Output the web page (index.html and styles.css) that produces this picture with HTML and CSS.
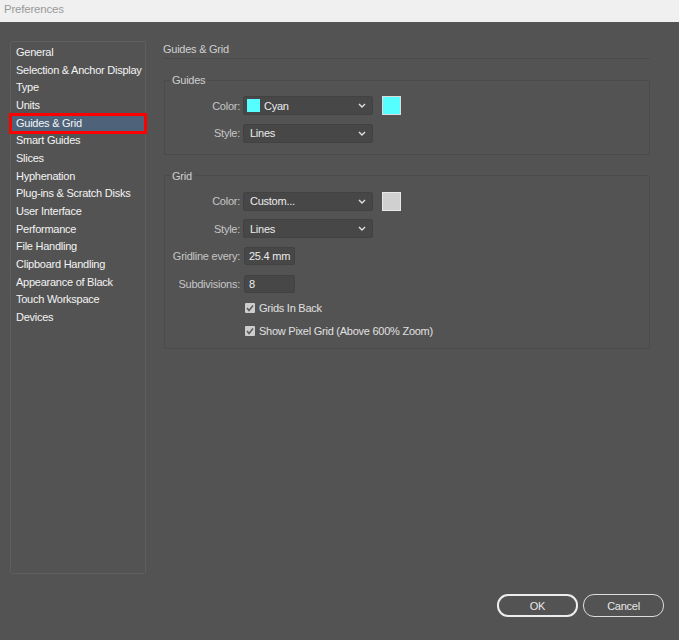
FILE: index.html
```html
<!DOCTYPE html>
<html>
<head>
<meta charset="utf-8">
<title>Preferences</title>
<link rel="stylesheet" href="styles.css">
</head>
<body>
<div class="window">
  <div class="titlebar">Preferences</div>
  <div class="main">
    <ul class="nav">
      <li>General</li>
      <li>Selection &amp; Anchor Display</li>
      <li>Type</li>
      <li>Units</li>
      <li class="selected">Guides &amp; Grid</li>
      <li>Smart Guides</li>
      <li>Slices</li>
      <li>Hyphenation</li>
      <li>Plug-ins &amp; Scratch Disks</li>
      <li>User Interface</li>
      <li>Performance</li>
      <li>File Handling</li>
      <li>Clipboard Handling</li>
      <li>Appearance of Black</li>
      <li>Touch Workspace</li>
      <li>Devices</li>
    </ul>
    <div class="content">
      <div class="page-title">Guides &amp; Grid</div>
      <fieldset class="group">
        <legend>Guides</legend>
        <div class="form">
          <span class="lbl">Color:</span>
          <div class="ctrl">
            <div class="select"><span class="mini cyan"></span><span class="val">Cyan</span><svg class="chev" width="8" height="5" viewBox="0 0 8 5"><polyline points="1,1 4,4 7,1" fill="none" stroke="#e0e0e0" stroke-width="1.4"/></svg></div>
            <span class="swatch cyan"></span>
          </div>
          <span class="lbl">Style:</span>
          <div class="ctrl">
            <div class="select"><span class="val">Lines</span><svg class="chev" width="8" height="5" viewBox="0 0 8 5"><polyline points="1,1 4,4 7,1" fill="none" stroke="#e0e0e0" stroke-width="1.4"/></svg></div>
          </div>
        </div>
      </fieldset>
      <fieldset class="group grid-group">
        <legend>Grid</legend>
        <div class="form">
          <span class="lbl">Color:</span>
          <div class="ctrl">
            <div class="select"><span class="val">Custom...</span><svg class="chev" width="8" height="5" viewBox="0 0 8 5"><polyline points="1,1 4,4 7,1" fill="none" stroke="#e0e0e0" stroke-width="1.4"/></svg></div>
            <span class="swatch gray"></span>
          </div>
          <span class="lbl">Style:</span>
          <div class="ctrl">
            <div class="select"><span class="val">Lines</span><svg class="chev" width="8" height="5" viewBox="0 0 8 5"><polyline points="1,1 4,4 7,1" fill="none" stroke="#e0e0e0" stroke-width="1.4"/></svg></div>
          </div>
          <span class="lbl">Gridline every:</span>
          <div class="ctrl"><div class="input">25.4 mm</div></div>
          <span class="lbl">Subdivisions:</span>
          <div class="ctrl"><div class="input">8</div></div>
        </div>
        <div class="checks">
          <div class="check"><span class="box"><svg width="10" height="10" viewBox="0 0 10 10"><polyline points="2,5 4,7.5 8,2.5" fill="none" stroke="#5a5a5a" stroke-width="1.5"/></svg></span>Grids In Back</div>
          <div class="check"><span class="box"><svg width="10" height="10" viewBox="0 0 10 10"><polyline points="2,5 4,7.5 8,2.5" fill="none" stroke="#5a5a5a" stroke-width="1.5"/></svg></span>Show Pixel Grid (Above 600% Zoom)</div>
        </div>
      </fieldset>
    </div>
  </div>
  <div class="footer">
    <button class="btn default">OK</button>
    <button class="btn">Cancel</button>
  </div>
</div>
</body>
</html>
```
FILE: styles.css
```css
* { box-sizing: border-box; }
html, body {
  margin: 0;
  padding: 0;
  background: #535353;
}
body {
  font-family: "Liberation Sans", Arial, sans-serif;
  font-size: 11px;
  letter-spacing: -0.25px;
  color: #e6e6e6;
}
.window {
  width: 679px;
  height: 640px;
  display: flex;
  flex-direction: column;
}
.titlebar {
  height: 22px;
  background: #f0f0f0;
  color: #9a9a9a;
  font-size: 11.5px;
  letter-spacing: -0.2px;
  line-height: 19px;
  padding-left: 4px;
}
.main {
  display: flex;
  padding: 19px 0 0 10px;
  height: 552px;
}
.nav {
  list-style: none;
  margin: 0;
  padding: 2px 0 0 0;
  width: 136px;
  height: 533px;
  border: 1px solid #5e5e5e;
  border-radius: 2px;
}
.nav li {
  height: 17.67px;
  line-height: 17.67px;
  padding-left: 5px;
  color: #f4f4f4;
  white-space: nowrap;
}
.nav li.selected {
  background: #4e6279;
  outline: 3px solid #ff0000;
  outline-offset: -1px;
}
.content {
  margin-left: 17px;
  width: 487px;
}
.page-title {
  line-height: 16px;
  padding-bottom: 1px;
  border-bottom: 1px solid #4b4b4b;
  color: #cfcfcf;
}
.group {
  margin: 13px 0 0 1px;
  width: 486px;
  border: 1px solid #4b4b4b;
  border-radius: 2px;
  padding: 8px 10px 11px 5px;
}
.group legend {
  padding: 0 2px;
  line-height: 16px;
  color: #cfcfcf;
}
.grid-group {
  padding-bottom: 10px;
}
.form {
  display: grid;
  grid-template-columns: 70px auto;
  grid-auto-rows: 19px;
  column-gap: 3px;
  row-gap: 8.5px;
  align-items: center;
}
.lbl {
  text-align: right;
  color: #c6c6c6;
  white-space: nowrap;
}
.ctrl {
  display: flex;
  align-items: center;
  gap: 9px;
}
.select {
  width: 130px;
  height: 19px;
  background: #474747;
  border: 1px solid #424242;
  border-radius: 2px;
  display: flex;
  align-items: center;
  padding: 0 6px 0 3px;
  color: #ececec;
}
.select .val {
  flex: 1;
  padding-left: 3px;
}
.select .mini {
  width: 13px;
  height: 13px;
  margin-right: 1px;
}
.cyan { background: #55ffff; }
.swatch {
  width: 19px;
  height: 19px;
  border: 1px solid #dcdcdc;
}
.swatch.gray {
  background: #d0d0d0;
  border-color: #e8e8e8;
}
.input {
  width: 51px;
  height: 18px;
  margin-left: 1px;
  background: #474747;
  border: 1px solid #424242;
  border-radius: 2px;
  line-height: 16px;
  padding-left: 4px;
  color: #ececec;
}
.checks {
  padding-left: 75px;
  margin-top: 8px;
  display: flex;
  flex-direction: column;
  gap: 9px;
}
.check {
  height: 14px;
  display: flex;
  align-items: center;
  gap: 4px;
  color: #e0e0e0;
}
.box {
  width: 10px;
  height: 10px;
  background: #cdcdcd;
  border-radius: 1px;
  display: flex;
}
.footer {
  display: flex;
  justify-content: flex-end;
  gap: 5px;
  padding: 20px 15px 0 0;
}
.btn {
  width: 81px;
  height: 23px;
  background: transparent;
  border: 1px solid #dcdcdc;
  border-radius: 11px;
  color: #e8e8e8;
  font-family: "Liberation Sans", Arial, sans-serif;
  font-size: 11px;
  letter-spacing: -0.25px;
  padding: 0;
}
.btn.default {
  border: 2px solid #ededed;
}
```
